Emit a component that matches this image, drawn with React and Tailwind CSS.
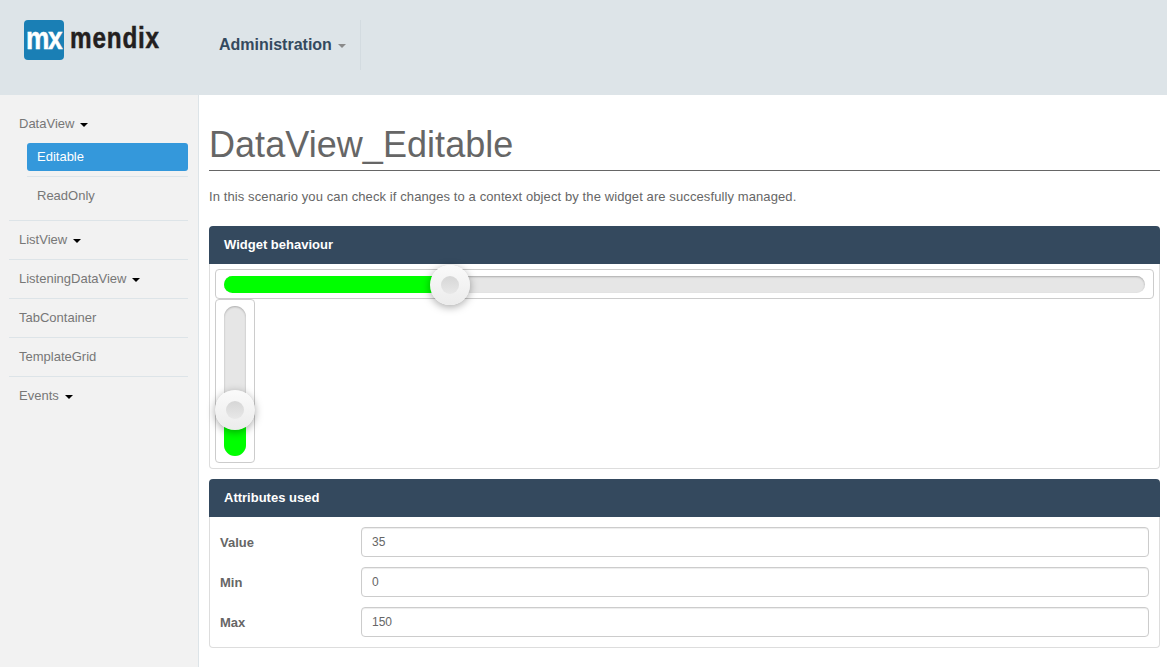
const sans = "font-['Liberation_Sans',Arial,sans-serif]";

function Caret({ className }) {
  return <span className={`inline-block w-0 h-0 border-x-4 border-x-transparent border-t-4 ${className}`} />;
}

function NavItem({ label, caret, last }) {
  return (
    <div className={`flex items-center pl-[10px] text-[13px] text-[#777] ${last ? "h-[38px]" : "h-[39px] border-b border-[#dde4e8]"}`}>
      {label}
      {caret && <Caret className="ml-[6px] mt-[2px] border-t-black" />}
    </div>
  );
}

function Sidebar() {
  return (
    <aside className="w-[199px] shrink-0 bg-[#f2f2f2] border-r border-[#dde4e8] pt-[9px] pl-[9px] pr-[10px]">
      <div className="h-[39px] flex items-center pl-[10px] text-[13px] text-[#777]">
        DataView
        <Caret className="ml-[6px] mt-[2px] border-t-black" />
      </div>
      <div className="pl-[18px]">
        <div className="h-[28px] rounded-[3px] bg-[#3498db] text-white text-[13px] flex items-center pl-[10px]">Editable</div>
        <div className="mt-[5px] mb-[6px] h-[38px] border-t border-[#dde4e8] flex items-center pl-[10px] text-[13px] text-[#777]">ReadOnly</div>
      </div>
      <div className="border-t border-[#dde4e8]">
        <NavItem label="ListView" caret />
        <NavItem label="ListeningDataView" caret />
        <NavItem label="TabContainer" />
        <NavItem label="TemplateGrid" />
        <NavItem label="Events" caret last />
      </div>
    </aside>
  );
}

function Panel({ title, className, children }) {
  return (
    <section className={className}>
      <h2 className="h-[38px] rounded-t-[4px] bg-[#34495e] text-white text-[13px] font-bold flex items-center pl-[15px]">{title}</h2>
      <div className="border border-t-0 border-[#ddd] rounded-b-[4px]">{children}</div>
    </section>
  );
}

function Handle({ className }) {
  return (
    <div className={`absolute w-[40px] h-[40px] rounded-full bg-gradient-to-b from-[#fafafa] to-[#ececec] shadow-[0_2px_8px_rgba(0,0,0,0.35)] flex items-center justify-center ${className}`}>
      <div className="w-[18px] h-[18px] rounded-full bg-gradient-to-b from-[#d6d6d6] to-[#e8e8e8]" />
    </div>
  );
}

function Field({ label, value }) {
  return (
    <div className="h-[30px] flex items-center">
      <label className="w-[151px] pl-[10px] text-[13px] font-bold text-[#666] pt-[2px]">{label}</label>
      <div className="flex-1 h-[30px] border border-[#ccc] rounded-[4px] flex items-center pl-[10px] text-[12px] text-[#666] shadow-[inset_0_1px_1px_rgba(0,0,0,0.075)]">{value}</div>
    </div>
  );
}

export default function App() {
  return (
    <div className={`w-[1167px] h-[667px] overflow-hidden flex flex-col bg-white ${sans}`}>
      <header className="h-[95px] shrink-0 bg-[#dde4e8] flex items-start pl-[24px]">
        <div className="mt-[20px] flex items-center w-[195px]">
          <div className="w-[40px] h-[40px] rounded-[4px] bg-[#1a7fb5] flex items-center justify-center overflow-hidden">
            <span className="inline-block scale-x-[0.82] text-white text-[32px] font-bold tracking-[-1.5px] leading-none mb-[5px] [-webkit-text-stroke:0.5px_white]">mx</span>
          </div>
          <span className="ml-[6px] mb-[5px] inline-block origin-left scale-x-[0.81] text-[30px] font-bold text-[#231f20] leading-none tracking-[1px] [-webkit-text-stroke:0.5px_#231f20]">mendix</span>
        </div>
        <div className="mt-[20px] h-[50px] pr-[14px] border-r border-[#d3dbe0] flex items-center text-[16px] font-bold text-[#34495e]">
          Administration
          <Caret className="ml-[6px] mt-[2px] border-t-[#8a8a8a]" />
        </div>
      </header>
      <div className="flex flex-1 min-h-0">
        <Sidebar />
        <main className="flex-1 pl-[10px] pr-[7px]">
          <h1 className="mt-[29px] h-[47px] border-b border-[#666] text-[36px] leading-[41px] tracking-[0.05px] text-[#666]">DataView_Editable</h1>
          <p className="mt-[17px] text-[13px] leading-[17px] tracking-[0.1px] text-[#666]">In this scenario you can check if changes to a context object by the widget are succesfully managed.</p>
          <Panel title="Widget behaviour" className="mt-[21px]">
            <div className="p-[5px]">
              <div className="relative h-[30px] border border-[#ccc] rounded-[4px] px-[8px] pt-[6px]">
                <div className="h-[17px] rounded-full bg-[#e6e6e6] shadow-[inset_0_1px_2px_rgba(0,0,0,0.25)] overflow-hidden">
                  <div className="h-full w-[228px] bg-[#00ff00]" />
                </div>
                <Handle className="left-[214px] top-[-5px]" />
              </div>
              <div className="relative w-[40px] h-[164px] border border-[#ccc] rounded-[4px] px-[8px] pt-[6px]">
                <div className="h-[150px] w-[22px] rounded-full bg-[#e6e6e6] shadow-[inset_0_1px_2px_rgba(0,0,0,0.25)] overflow-hidden flex flex-col justify-end">
                  <div className="w-full h-[46px] bg-[#00ff00]" />
                </div>
                <Handle className="left-[-1px] top-[90px]" />
              </div>
            </div>
          </Panel>
          <Panel title="Attributes used" className="mt-[10px]">
            <div className="pr-[10px] py-[10px] flex flex-col gap-[10px]">
              <Field label="Value" value="35" />
              <Field label="Min" value="0" />
              <Field label="Max" value="150" />
            </div>
          </Panel>
        </main>
      </div>
    </div>
  );
}
